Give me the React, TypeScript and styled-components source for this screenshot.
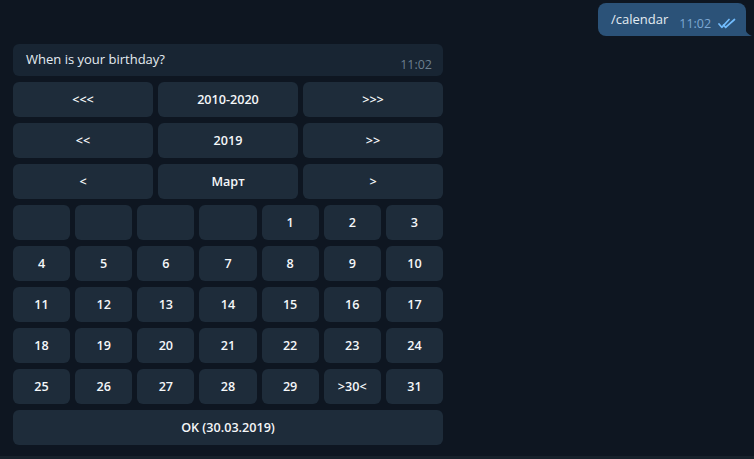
import React from "react";
import styled, { createGlobalStyle } from "styled-components";

const Global = createGlobalStyle`
  html, body { margin: 0; padding: 0; background: #0e1621; }
  body { font-family: "Open Sans", "Noto Sans", sans-serif; }
`;

const Page = styled.div`
  width: 754px;
  height: 459px;
  background: #0e1621;
  display: flex;
  flex-direction: column;
  box-sizing: border-box;
  padding-top: 3px;
  position: relative;
  overflow: hidden;
`;

const OutRow = styled.div`
  display: flex;
  justify-content: flex-end;
  padding-right: 8px;
`;

const OutBubble = styled.div`
  position: relative;
  width: 148px;
  height: 33px;
  box-sizing: border-box;
  background: #2b5278;
  border-radius: 8px 8px 0 8px;
  display: flex;
  align-items: center;
  padding: 0 0 0 13px;
  color: #e4ecf2;
  font-size: 13px;
`;

const Tail = styled.svg`
  position: absolute;
  right: -6px;
  bottom: 0;
`;

const OutText = styled.span`
  margin-top: -1px;
`;

const OutMeta = styled.span`
  display: flex;
  align-items: center;
  margin-left: 11px;
  margin-top: 8px;
  color: #7da8d3;
  font-size: 12.5px;
  gap: 7px;
`;

const Incoming = styled.div`
  margin-left: 13px;
  margin-top: 8px;
  width: 430px;
  display: flex;
  flex-direction: column;
  gap: 6px;
`;

const InBubble = styled.div`
  height: 32px;
  box-sizing: border-box;
  background: #182533;
  border-radius: 6px;
  display: flex;
  justify-content: space-between;
  padding: 0 11px 0 13px;
  color: #e4ecf2;
  font-size: 13px;
`;

const InText = styled.span`
  line-height: 32px;
  margin-top: -1px;
`;

const InTime = styled.span`
  align-self: flex-end;
  margin-bottom: 3px;
  color: #6d7f8f;
  font-size: 12.5px;
`;

const Keyboard = styled.div`
  display: flex;
  flex-direction: column;
  gap: 6px;
`;

const Row = styled.div<{ $cols: number }>`
  display: grid;
  grid-template-columns: repeat(${(p) => p.$cols}, 1fr);
  gap: 5px;
`;

const Key = styled.div`
  height: 35px;
  border-radius: 6px;
  background: #1e2c3a;
  color: #f5f7f9;
  font-size: 12.6px;
  font-weight: 600;
  display: flex;
  align-items: center;
  justify-content: center;
`;

const BottomStrip = styled.div`
  position: absolute;
  left: 0;
  right: 0;
  bottom: 0;
  height: 3px;
  background: #17212b;
`;

const days: string[][] = [
  ["", "", "", "", "1", "2", "3"],
  ["4", "5", "6", "7", "8", "9", "10"],
  ["11", "12", "13", "14", "15", "16", "17"],
  ["18", "19", "20", "21", "22", "23", "24"],
  ["25", "26", "27", "28", "29", ">30<", "31"],
];

const Checks = () => (
  <svg width="19" height="11" viewBox="0 0 19 11" fill="none">
    <path d="M1 6 L3.8 9.3 L11 1.5" stroke="#72bcfd" strokeWidth="1.7" strokeLinecap="round" strokeLinejoin="round" />
    <path d="M7.6 9.3 L16.5 1.5" stroke="#72bcfd" strokeWidth="1.7" strokeLinecap="round" />
    <path d="M5.6 7 L7.6 9.3" stroke="#72bcfd" strokeWidth="1.7" strokeLinecap="round" />
  </svg>
);

export default function App() {
  return (
    <>
      <Global />
      <Page>
        <OutRow>
          <OutBubble>
            <OutText>/calendar</OutText>
            <OutMeta>
              11:02
              <Checks />
            </OutMeta>
            <Tail width="7" height="10" viewBox="0 0 7 10">
              <path d="M0 0 C0 5 2 8 7 10 L0 10 Z" fill="#2b5278" />
            </Tail>
          </OutBubble>
        </OutRow>
        <Incoming>
          <InBubble>
            <InText>When is your birthday?</InText>
            <InTime>11:02</InTime>
          </InBubble>
          <Keyboard>
            <Row $cols={3}>
              <Key>&lt;&lt;&lt;</Key>
              <Key>2010-2020</Key>
              <Key>&gt;&gt;&gt;</Key>
            </Row>
            <Row $cols={3}>
              <Key>&lt;&lt;</Key>
              <Key>2019</Key>
              <Key>&gt;&gt;</Key>
            </Row>
            <Row $cols={3}>
              <Key>&lt;</Key>
              <Key>Март</Key>
              <Key>&gt;</Key>
            </Row>
            {days.map((r, i) => (
              <Row $cols={7} key={i}>
                {r.map((d, j) => (
                  <Key key={j}>{d}</Key>
                ))}
              </Row>
            ))}
            <Row $cols={1}>
              <Key>OK (30.03.2019)</Key>
            </Row>
          </Keyboard>
        </Incoming>
        <BottomStrip />
      </Page>
    </>
  );
}
